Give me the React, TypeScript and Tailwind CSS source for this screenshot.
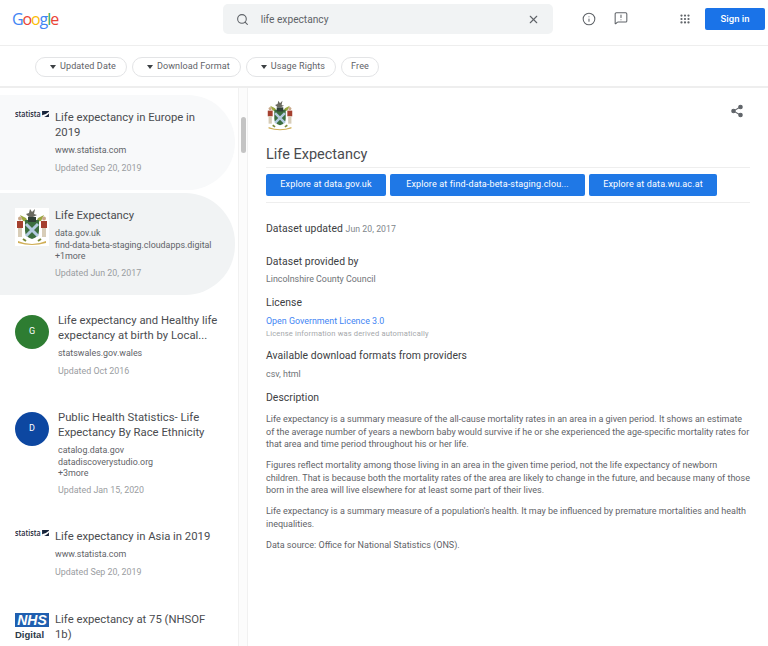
import { Search, X, Info, MessageSquareWarning, Grip, Share2 } from "lucide-react";

function Crest({ className }: { className?: string }) {
  return (
    <svg viewBox="0 0 34 38" className={className}>
      <rect width="34" height="38" fill="#fff" />
      <path d="M15 1l2 3 3-3-1 5 3 1-4 2h-4l-3-3 3-1z" fill="#6a6a60" />
      <path d="M5 7l6 3 2 4-5-1zM29 7l-6 3-2 4 5-1z" fill="#9aa83e" />
      <rect x="2" y="13" width="6" height="7" fill="#a5402f" />
      <circle cx="5" cy="10.5" r="2" fill="#c9a88a" />
      <rect x="3" y="20" width="4" height="9" fill="#d8cdb8" />
      <rect x="26" y="13" width="6" height="7" fill="#a5402f" />
      <circle cx="29" cy="10.5" r="2" fill="#c9a88a" />
      <rect x="27" y="20" width="4" height="9" fill="#d8cdb8" />
      <path d="M10 12h14v11q0 6-7 8-7-2-7-8z" fill="#3c6e3f" />
      <path d="M11 16l12 12M23 16L11 28" stroke="#b4cbe0" strokeWidth="3" />
      <rect x="13" y="9" width="8" height="5" fill="#2f3e36" />
      <path d="M3 33q14 6 28 0v2q-14 4-28 0z" fill="#d0ae55" />
      <path d="M8 31l3 2M26 31l-3 2" stroke="#7a8a3a" strokeWidth="2" />
    </svg>
  );
}

function StatistaLogo() {
  return (
    <div className="flex items-center justify-between h-[10px] w-[34px]">
      <span className="text-[9.5px] leading-[10px] font-semibold text-[#1f2a3a] font-['Open_Sans',sans-serif] scale-x-75 origin-left w-[25px] whitespace-nowrap">
        statista
      </span>
      <svg viewBox="0 0 8 7" className="w-[7px] h-[6px] shrink-0">
        <rect width="8" height="7" fill="#16233a" />
        <path d="M0 5q4 0 8-4v2q-4 4-6 4H0z" fill="#fff" />
      </svg>
    </div>
  );
}

function NhsLogo() {
  return (
    <div className="flex flex-col items-start w-[34px] mt-[2px]">
      <div className="w-[34px] h-[14px] bg-[#1f5fb0] text-white text-[14px] leading-[14px] font-bold italic text-center font-['Liberation_Sans',sans-serif]">
        NHS
      </div>
      <div className="text-[9.5px] leading-[12px] mt-[2px] font-bold text-[#2c3a48] font-['Liberation_Sans',sans-serif]">Digital</div>
    </div>
  );
}

function Avatar({ letter, color }: { letter: string; color: string }) {
  return (
    <div className={`w-[34px] h-[34px] mt-[3px] rounded-full flex items-center justify-center text-white text-[9px] ${color}`}>
      {letter}
    </div>
  );
}

function ResultItem({
  logo,
  title,
  sources,
  more,
  updated,
  className,
  gap,
}: {
  logo: React.ReactNode;
  title: React.ReactNode;
  sources: string[];
  more?: string;
  updated?: string;
  className: string;
  gap: string;
}) {
  return (
    <div className={`flex w-[235px] pl-[15px] pr-[10px] ${gap} ${className}`}>
      <div className="w-[34px] shrink-0">{logo}</div>
      <div className="min-w-0">
        <div className="pt-[1px] max-w-[164px] text-[11.3px] leading-[15px] text-[#4a4c50]">{title}</div>
        <div className="mt-[4px] text-[8.9px] leading-[12px] text-[#5f6368]">
          {sources.map((s) => (
            <div key={s} className="whitespace-nowrap">{s}</div>
          ))}
          {more && <div className="leading-[10px]">{more}</div>}
        </div>
        {updated && <div className="mt-[5px] text-[8.9px] leading-[14px] text-[#9a9da1]">{updated}</div>}
      </div>
    </div>
  );
}

function Filter({ label, caret = true }: { label: string; caret?: boolean }) {
  return (
    <div className={`h-[20px] mt-[1px] flex items-center gap-[4px] rounded-full border border-[#e3e4e6] text-[9.05px] text-[#5f6368] tracking-[0.1px] ${caret ? "pl-[14px] pr-[10px]" : "px-[9px]"}`}>
      {caret && <span className="w-0 h-0 border-x-[3.5px] border-x-transparent border-t-[4px] border-t-[#3c4043]" />}
      {label}
    </div>
  );
}

function ExploreButton({ label, width }: { label: string; width: string }) {
  return (
    <div className={`h-[22px] flex items-center justify-center rounded-[2px] bg-[#1f78e6] text-white text-[9px] tracking-[0.15px] whitespace-nowrap ${width}`}>
      {label}
    </div>
  );
}

function Section({ title, children }: { title: string; children: React.ReactNode }) {
  return (
    <div className="mt-[10px]">
      <div className="text-[10.4px] leading-[14px] text-[#3c4043] tracking-[0.05px]">{title}</div>
      <div className="mt-[4px]">{children}</div>
    </div>
  );
}

export default function App() {
  return (
    <div className="w-[768px] h-[646px] overflow-hidden bg-white flex flex-col font-['Roboto',sans-serif]">
      <header className="h-[46px] shrink-0 flex items-center border-b border-[#eeeeee] pl-[12px] pr-[3px]">
        <div className="w-[211px] text-[16px] leading-[20px] tracking-[-1.1px] font-medium font-['Open_Sans',sans-serif] mb-[8px]">
          <span className="text-[#4285f4]">G</span>
          <span className="text-[#ea4335]">o</span>
          <span className="text-[#fbbc05]">o</span>
          <span className="text-[#4285f4]">g</span>
          <span className="text-[#34a853]">l</span>
          <span className="text-[#ea4335]">e</span>
        </div>
        <div className="w-[331px] h-[30px] mb-[7px] rounded-[5px] bg-[#f1f3f4] flex items-center pl-[13px] pr-[13px]">
          <Search className="w-[13px] h-[13px] text-[#5f6368]" strokeWidth={2} />
          <span className="ml-[12px] pt-[1px] text-[10.2px] text-[#5f6368] flex-1">life expectancy</span>
          <X className="w-[13px] h-[13px] text-[#5f6368]" strokeWidth={2} />
        </div>
        <Info className="ml-[29px] mb-[7px] w-[14px] h-[14px] text-[#5f6368]" strokeWidth={1.8} />
        <MessageSquareWarning className="ml-[18px] mb-[9px] w-[14px] h-[14px] text-[#5f6368]" strokeWidth={1.8} />
        <Grip className="ml-[51px] mb-[7px] w-[12px] h-[12px] text-[#5f6368]" strokeWidth={2.5} />
        <div className="ml-[14px] w-[60px] h-[22px] mb-[7px] rounded-[2px] bg-[#1a73e8] flex items-center justify-center text-white text-[9.5px] font-medium">
          Sign in
        </div>
      </header>

      <div className="h-[42px] shrink-0 flex items-center gap-[5px] pl-[35px] border-b-2 border-[#eeeeee]">
        <Filter label="Updated Date" />
        <Filter label="Download Format" />
        <Filter label="Usage Rights" />
        <Filter label="Free" caret={false} />
      </div>

      <div className="flex-1 flex min-h-0">
        <aside className="w-[238px] shrink-0 pt-[7px] overflow-hidden">
          <ResultItem
            gap="gap-[6px]"
            className="h-[95px] pt-[14px] bg-[#f8f9fa] rounded-r-[50px]"
            logo={<StatistaLogo />}
            title={<>Life expectancy in Europe in 2019</>}
            sources={["www.statista.com"]}
            updated="Updated Sep 20, 2019"
          />
          <ResultItem
            gap="gap-[6px]"
            className="h-[102px] mt-[3px] pt-[14px] bg-[#f1f3f4] rounded-r-[50px]"
            logo={<Crest className="w-[34px] h-[38px] mt-[1px]" />}
            title="Life Expectancy"
            sources={["data.gov.uk", "find-data-beta-staging.cloudapps.digital"]}
            more="+1more"
            updated="Updated Jun 20, 2017"
          />
          <ResultItem
            gap="gap-[9px]"
            className="h-[97px] pt-[17px]"
            logo={<Avatar letter="G" color="bg-[#2e7d32]" />}
            title={<>Life expectancy and Healthy life expectancy at birth by Local...</>}
            sources={["statswales.gov.wales"]}
            updated="Updated Oct 2016"
          />
          <ResultItem
            gap="gap-[9px]"
            className="h-[118px] pt-[17px]"
            logo={<Avatar letter="D" color="bg-[#0d47a1]" />}
            title={<>Public Health Statistics- Life Expectancy By Race Ethnicity</>}
            sources={["catalog.data.gov", "datadiscoverystudio.org"]}
            more="+3more"
            updated="Updated Jan 15, 2020"
          />
          <ResultItem
            gap="gap-[6px]"
            className="h-[84px] pt-[18px]"
            logo={<StatistaLogo />}
            title="Life expectancy in Asia in 2019"
            sources={["www.statista.com"]}
            updated="Updated Sep 20, 2019"
          />
          <ResultItem
            gap="gap-[6px]"
            className="h-[60px] pt-[17px]"
            logo={<NhsLogo />}
            title={<>Life expectancy at 75 (NHSOF 1b)</>}
            sources={[]}
          />
        </aside>

        <div className="w-[10px] shrink-0 border-x border-[#f1f1f1] bg-[#fcfcfc] pt-[29px] pl-[2px]">
          <div className="w-[5px] h-[36px] rounded-full bg-[#c4c4c4]" />
        </div>

        <main className="flex-1 min-w-0 pl-[18px] pr-[18px] pt-[12px]">
          <div className="flex items-start justify-between h-[32px]">
            <Crest className="w-[28px] h-[31px]" />
            <Share2 className="mr-[6px] mt-[4px] w-[14px] h-[14px] text-[#5f6368]" fill="#5f6368" strokeWidth={1.8} />
          </div>
          <h1 className="mt-[13px] text-[14.5px] leading-[20px] text-[#4a4c50]">Life Expectancy</h1>
          <div className="mt-[2px] border-t border-[#eeeeee] pt-[6px] pb-[6px] border-b flex gap-[4px]">
            <ExploreButton label="Explore at data.gov.uk" width="w-[120px]" />
            <ExploreButton label="Explore at find-data-beta-staging.clou..." width="w-[195px]" />
            <ExploreButton label="Explore at data.wu.ac.at" width="w-[128px]" />
          </div>

          <div className="mt-[19px] text-[10.4px] leading-[14px] text-[#3c4043] tracking-[0.05px]">
            Dataset updated <span className="text-[8.7px] text-[#80868b]">Jun 20, 2017</span>
          </div>

          <div className="mt-[19px]">
            <Section title="Dataset provided by">
              <div className="-mt-[1px] text-[8.9px] leading-[14px] text-[#6f7377]">Lincolnshire County Council</div>
            </Section>
            <Section title="License">
              <div className="text-[8.9px] leading-[14px] text-[#4285f4]">Open Government Licence 3.0</div>
              <div className="text-[7.55px] leading-[11px] text-[#a5a8ab] tracking-[0.15px]">License information was derived automatically</div>
            </Section>
            <Section title="Available download formats from providers">
              <div className="text-[8.9px] leading-[14px] text-[#6f7377]">csv, html</div>
            </Section>
            <Section title="Description">
              <div className="mt-[8px] w-[484px] text-[9px] leading-[12.5px] text-[#5f6368] flex flex-col gap-[8.5px]">
                <p>
                  Life expectancy is a summary measure of the all-cause mortality rates in an area in a given period. It shows an estimate of the average number of years a newborn baby would survive if he or she experienced the age-specific mortality rates for that area and time period throughout his or her life.
                </p>
                <p>
                  Figures reflect mortality among those living in an area in the given time period, not the life expectancy of newborn children. That is because both the mortality rates of the area are likely to change in the future, and because many of those born in the area will live elsewhere for at least some part of their lives.
                </p>
                <p>
                  Life expectancy is a summary measure of a population's health. It may be influenced by premature mortalities and health inequalities.
                </p>
                <p>Data source: Office for National Statistics (ONS).</p>
              </div>
            </Section>
          </div>
        </main>
      </div>
    </div>
  );
}
